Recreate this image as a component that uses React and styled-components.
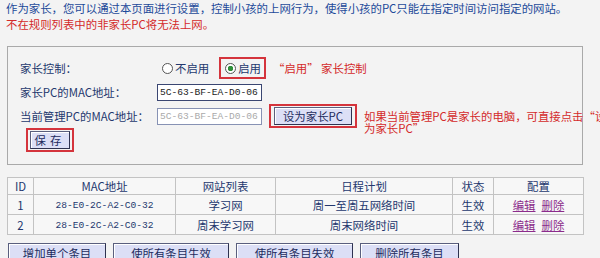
import styled, { createGlobalStyle } from "styled-components";

const GlobalStyle = createGlobalStyle`
  body {
    margin: 0;
    background: #f3f3f3;
    font-family: "Noto Sans CJK SC", sans-serif;
    font-size: 11.4px;
    overflow: hidden;
  }
`;

const Page = styled.div`
  width: 600px;
  height: 258px;
  padding-left: 7px;
  box-sizing: border-box;
  overflow: hidden;
`;

const Intro = styled.p`
  margin: 0 0 0 -1px;
  line-height: 16px;
  white-space: nowrap;
  color: ${(props) => props.color || "#1d4a9a"};
`;

const Panel = styled.div`
  width: 576px;
  height: 119px;
  box-sizing: border-box;
  margin-top: 14px;
  border: 1px solid #a9a9a9;
  padding: 9px 0 0 12px;
`;

const FormRow = styled.div`
  display: flex;
  align-items: center;
  height: 24px;
`;

const Label = styled.span`
  width: 137px;
  flex: none;
  color: #24386e;
`;

const Radio = styled.span`
  display: inline-flex;
  align-items: center;
  flex: none;
  color: #24386e;
  margin-left: ${(props) => props.ml || 0}px;
  &::before {
    content: "";
    width: 9px;
    height: 9px;
    border-radius: 50%;
    border: 1px solid #555;
    background: ${(props) =>
      props.checked
        ? "radial-gradient(circle, #2f8f3a 0 2.5px, #fff 3px)"
        : "#fff"};
    margin-right: 2px;
  }
`;

const Mark = styled.span`
  display: inline-flex;
  align-items: center;
  flex: none;
  border: 2px solid #d4343c;
  padding: ${(props) => props.pad || "2px 3px"};
  margin-left: ${(props) => props.ml || 0}px;
`;

const Note = styled.span`
  color: #d42a2a;
  margin-left: ${(props) => props.ml || 0}px;
  margin-top: ${(props) => props.mt || 0}px;
  line-height: 12px;
  white-space: nowrap;
`;

const MacInput = styled.div`
  flex: none;
  width: 105px;
  height: 17px;
  box-sizing: border-box;
  border: 1px solid ${(props) => (props.disabled ? "#8792b4" : "#3a4672")};
  background: #fff;
  font-family: "Liberation Mono", monospace;
  font-size: 9.6px;
  line-height: 15px;
  padding-left: 2px;
  white-space: nowrap;
  overflow: hidden;
  color: ${(props) => (props.disabled ? "#aaa" : "#222")};
`;

const Button = styled.div`
  display: inline-flex;
  align-items: center;
  justify-content: center;
  flex: none;
  box-sizing: border-box;
  width: ${(props) => props.w}px;
  height: ${(props) => props.h || 18}px;
  background: #dcdff6;
  border: 1px solid #5a5f7e;
  border-right-color: #2e3250;
  border-bottom-color: #2e3250;
  box-shadow: inset 1px 1px 0 #fff;
  color: #1e2c5e;
  letter-spacing: ${(props) => props.ls || 0}px;
  white-space: nowrap;
`;

const Table = styled.table`
  margin-top: 12px;
  width: 576px;
  border-collapse: collapse;
  table-layout: fixed;
  color: #24386e;
  th, td {
    border: 1px solid #c3c3c3;
    background: #f7f7f7;
    height: 16px;
    padding: 0;
    text-align: center;
    font-weight: normal;
    line-height: 16px;
  }
`;

const Mac = styled.span`
  font-family: "Liberation Mono", monospace;
  font-size: 9.6px;
`;

const LinkText = styled.a`
  color: #8b2c8b;
  text-decoration: underline;
  margin: 0 3px;
`;

const ButtonBar = styled.div`
  display: flex;
  gap: 7px;
  margin-top: 8px;
  margin-left: 1px;
`;

const rules = [
  { id: 1, mac: "28-E0-2C-A2-C0-32", site: "学习网", plan: "周一至周五网络时间" },
  { id: 2, mac: "28-E0-2C-A2-C0-32", site: "周末学习网", plan: "周末网络时间" },
];

export default function App() {
  return (
    <Page>
      <GlobalStyle />
      <Intro>
        作为家长，您可以通过本页面进行设置，控制小孩的上网行为，使得小孩的PC只能在指定时间访问指定的网站。
      </Intro>
      <Intro color="#d42a2a">不在规则列表中的非家长PC将无法上网。</Intro>
      <Panel>
        <FormRow>
          <Label>家长控制：</Label>
          <Radio ml={5}>不启用</Radio>
          <Mark ml={10} pad="1px 3px 1px 4px">
            <Radio checked>启用</Radio>
          </Mark>
          <Note ml={7}>“启用” 家长控制</Note>
        </FormRow>
        <FormRow>
          <Label>家长PC的MAC地址：</Label>
          <MacInput>5C-63-BF-EA-D0-06</MacInput>
        </FormRow>
        <FormRow>
          <Label>当前管理PC的MAC地址：</Label>
          <MacInput disabled>5C-63-BF-EA-D0-06</MacInput>
          <Mark ml={7} pad="1px 3px">
            <Button w={78}>设为家长PC</Button>
          </Mark>
          <Note ml={7} mt={11}>
            如果当前管理PC是家长的电脑，可直接点击“设
            <br />
            为家长PC”
          </Note>
        </FormRow>
        <FormRow>
          <Mark ml={6} pad="1px 2px">
            <Button w={40} ls={4}>保存</Button>
          </Mark>
        </FormRow>
      </Panel>
      <Table>
        <colgroup>
          <col style={{ width: 26 }} />
          <col style={{ width: 142 }} />
          <col style={{ width: 100 }} />
          <col style={{ width: 177 }} />
          <col style={{ width: 41 }} />
          <col style={{ width: 90 }} />
        </colgroup>
        <thead>
          <tr>
            <th>ID</th>
            <th>MAC地址</th>
            <th>网站列表</th>
            <th>日程计划</th>
            <th>状态</th>
            <th>配置</th>
          </tr>
        </thead>
        <tbody>
          {rules.map((r) => (
            <tr key={r.id}>
              <td>{r.id}</td>
              <td>
                <Mac>{r.mac}</Mac>
              </td>
              <td>{r.site}</td>
              <td>{r.plan}</td>
              <td>生效</td>
              <td>
                <LinkText>编辑</LinkText>
                <LinkText>删除</LinkText>
              </td>
            </tr>
          ))}
        </tbody>
      </Table>
      <ButtonBar>
        <Button w={98} h={20}>增加单个条目</Button>
        <Button w={116} h={20}>使所有条目生效</Button>
        <Button w={117} h={20}>使所有条目失效</Button>
        <Button w={99} h={20}>删除所有条目</Button>
      </ButtonBar>
    </Page>
  );
}
